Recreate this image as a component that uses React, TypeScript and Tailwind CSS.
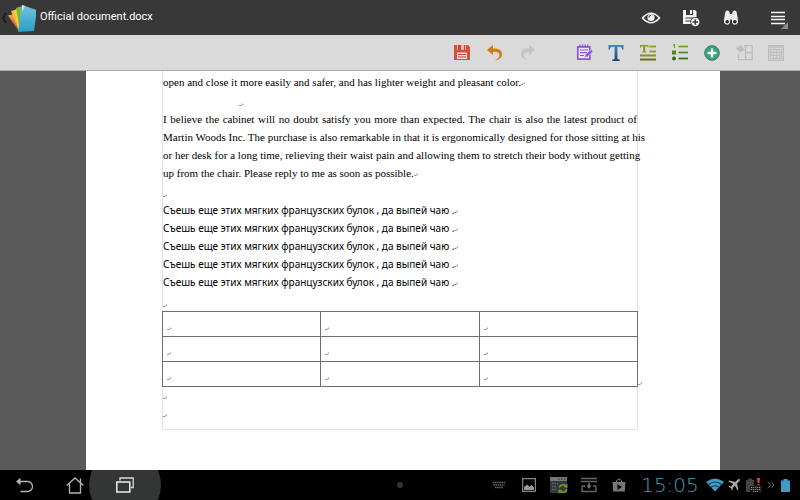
import type { ReactNode } from "react";

interface IconButtonProps {
  label: string;
  className: string;
  disabled?: boolean;
  children: ReactNode;
}

function IconButton({ label, className, disabled, children }: IconButtonProps) {
  return (
    <button
      type="button"
      aria-label={label}
      disabled={disabled}
      className={`flex h-full shrink-0 items-center justify-center ${className}`}
    >
      {children}
    </button>
  );
}

function AppLogo() {
  return (
    <svg width="36" height="30" viewBox="0 0 36 30" aria-hidden="true">
      <defs>
        <linearGradient id="logoBlue" x1="0" y1="0" x2="0" y2="1">
          <stop offset="0" stopColor="#76c3df" />
          <stop offset="1" stopColor="#279fc4" />
        </linearGradient>
        <linearGradient id="logoOrange" x1="0" y1="0" x2="0" y2="1">
          <stop offset="0" stopColor="#f5a25a" />
          <stop offset="1" stopColor="#cf4a22" />
        </linearGradient>
      </defs>
      <path d="M6 10L3 15l3 5" fill="none" stroke="#171717" strokeWidth="1.500" />
      <path d="M8 12.500l6-1.500 6 15-2 1z" fill="url(#logoOrange)" />
      <path d="M11 8l7-2 3 20-2 2z" fill="#f0bd35" />
      <path d="M14 7.500l4-2 4 3-1 19-2 .5z" fill="#e8d34a" />
      <path d="M16 5l6-2 2 24-4 1z" fill="#7fb53e" />
      <path d="M22 2l15 5-3 21-16 1z" fill="url(#logoBlue)" />
      <path d="M22 2l3 1-3 6z" fill="#bfe4ef" />
    </svg>
  );
}

function EyeIcon() {
  return (
    <svg width="20" height="14" viewBox="0 0 20 14" aria-hidden="true">
      <path
        d="M1.500 7Q10-2.500 18.500 7Q10 16.500 1.500 7z"
        fill="none"
        stroke="#f2f2f2"
        strokeWidth="1.700"
      />
      <circle cx="10" cy="6.500" r="3.600" fill="#f2f2f2" />
      <path d="M8 6.500a2 2 0 0 1 2-2" fill="none" stroke="#444" strokeWidth="1.200" />
    </svg>
  );
}

function SaveAsIcon() {
  return (
    <svg width="18" height="18" viewBox="0 0 18 18" aria-hidden="true">
      <path d="M1 1h12l1.500 1.500V15H1z" fill="#f2f2f2" />
      <path d="M4 1v5h7V1" fill="#383838" />
      <path d="M8 1h2v4H8z" fill="#f2f2f2" />
      <path d="M3.500 9h8M3.500 12h6" stroke="#383838" strokeWidth="1.200" />
      <circle cx="13.300" cy="13" r="5" fill="#383838" />
      <circle cx="13.300" cy="13" r="4.200" fill="#f2f2f2" />
      <path d="M13.300 10.300v5.400M10.600 13H16" stroke="#383838" strokeWidth="1.400" />
    </svg>
  );
}

function BinocularsIcon() {
  return (
    <svg width="14" height="15" viewBox="0 0 14 15" aria-hidden="true">
      <path
        d="M1.500 1.500Q3.300-.3 5.200 1.500L6 4h2l.8-2.500Q10.700-.3 12.500 1.500L14 9.500v3.300Q12.500 15 10 14.800L8 13V9.500H6V13L4 14.800Q1.500 15 0 12.800V9.500z"
        fill="#ededed"
      />
      <circle cx="3.200" cy="11.800" r="1.800" fill="#2b2b2b" />
      <circle cx="10.800" cy="11.800" r="1.800" fill="#2b2b2b" />
    </svg>
  );
}

function MenuIcon() {
  return (
    <svg width="14" height="14" viewBox="0 0 14 14" aria-hidden="true">
      <path d="M0 1.500h14M0 5.500h14M0 8.500h14M0 12.500h14" stroke="#f5f5f5" strokeWidth="1.300" />
    </svg>
  );
}

function SaveIcon() {
  return (
    <svg width="16" height="17" viewBox="0 0 16 17" aria-hidden="true">
      <path d="M0 1h14l2 2v13H0z" fill="#d4503a" />
      <path d="M3 1h9v5H3z" fill="#e9b5a9" />
      <path d="M4 1h3v5H4zM10 1h1v5h-1z" fill="#c84630" />
      <path d="M3 8.500h10V15H3z" fill="#f0dcd6" />
      <path d="M4 10.500h8M4 13h8" stroke="#c84630" strokeWidth="1.200" />
    </svg>
  );
}

function UndoIcon() {
  return (
    <svg width="16" height="16" viewBox="0 0 16 16" aria-hidden="true">
      <path d="M0 5l6-5v3.500c6-.5 9 2 9 5.500 0 3.500-3 6-7 6.500 3-1.500 4.500-3.500 4.500-5.500 0-2.500-2.500-3.500-6.500-3.300V10z" fill="#cf7d12" />
    </svg>
  );
}

function RedoIcon() {
  return (
    <svg width="16" height="16" viewBox="0 0 16 16" aria-hidden="true">
      <path d="M15 5L9 0v3.500C4 3.500 1 5.500 1 9c0 3 3 5.500 6.500 6C5 13.500 3.800 12 3.800 10 3.800 8 6 7 9 7v3z" fill="#c4c4c4" />
    </svg>
  );
}

function NoteIcon() {
  return (
    <svg width="17" height="17" viewBox="0 0 17 17" aria-hidden="true">
      <path d="M1.800 2.800h12v12.400h-12z" fill="#efe6fa" stroke="#8f55d6" strokeWidth="1.700" />
      <path d="M4 .5v3M6.600.5v3M9.200.5v3M11.800.5v3" stroke="#8f55d6" strokeWidth="1.300" />
      <path d="M4 6h8M4 8.700h7M4 11.500h4" stroke="#8f55d6" strokeWidth="1.200" />
      <path d="M8.500 13.500l1-3L15 5.500l2 2-5.500 5.200z" fill="#8f55d6" stroke="#e4dcec" strokeWidth=".6" />
    </svg>
  );
}

function FontIcon() {
  return (
    <svg width="16" height="16" viewBox="0 0 16 16" aria-hidden="true">
      <defs>
        <linearGradient id="fontBlue" x1="0" y1="0" x2="0" y2="1">
          <stop offset="0" stopColor="#3c86d2" />
          <stop offset="1" stopColor="#1d3f73" />
        </linearGradient>
      </defs>
      <path d="M.5 0h15v4.500h-1.200C13.800 2.500 13 1.800 11 1.800H9.400V13c0 1 .6 1.500 2.300 1.500V16H4.300v-1.500c1.700 0 2.300-.5 2.300-1.500V1.800H5C3 1.800 2.200 2.500 1.700 4.500H.5z" fill="url(#fontBlue)" />
    </svg>
  );
}

function ParagraphIcon() {
  return (
    <svg width="16" height="17" viewBox="0 0 16 17" aria-hidden="true">
      <path d="M0 1h8.500v2.500h-1L7 2.300H5.200v5l1 .4v.8h-4v-.8l1-.4v-5H1.500L1 3.500H0z" fill="#8b941c" />
      <path d="M9.500 2.500H16M9.500 7.500H16" stroke="#98a021" strokeWidth="1.800" />
      <path d="M0 11.500h16" stroke="#8b901a" strokeWidth="2" />
      <path d="M0 15.500h16" stroke="#6f6e14" strokeWidth="2" />
    </svg>
  );
}

function ListIcon() {
  return (
    <svg width="16" height="17" viewBox="0 0 16 17" aria-hidden="true">
      <path d="M1 1l1.500-.5V4" fill="none" stroke="#69a51c" strokeWidth="1.200" />
      <path d="M0 6.500h4v4H0z" fill="#4c8a12" />
      <circle cx="2" cy="14.500" r="2" fill="#366b12" />
      <path d="M6.500 2.500H16" stroke="#69a51c" strokeWidth="1.700" />
      <path d="M6.500 8.500H16" stroke="#4c8a12" strokeWidth="1.700" />
      <path d="M6.500 14.500H16" stroke="#366b12" strokeWidth="1.700" />
    </svg>
  );
}

function AddIcon() {
  return (
    <svg width="16" height="16" viewBox="0 0 16 16" aria-hidden="true">
      <circle cx="8" cy="8" r="7.300" fill="#39a07f" stroke="#258361" />
      <path d="M8 3.500v9M3.500 8h9" stroke="#f4fbf8" strokeWidth="2.400" />
    </svg>
  );
}

function InsertCellIcon() {
  return (
    <svg width="17" height="17" viewBox="0 0 17 17" aria-hidden="true">
      <path d="M8 1.700h8.200v14H2.500V9.500M9.500 2v14M9.500 8.500H16" fill="none" stroke="#bdbdbd" strokeWidth="1.300" />
      <path d="M0 4l5-3 3.500 4.500L4 8.500z" fill="#bdbdbd" />
    </svg>
  );
}

function TableIcon() {
  return (
    <svg width="16" height="16" viewBox="0 0 16 16" aria-hidden="true">
      <path d="M.6.6h14.800v14.800H.6z" fill="#d4d4d4" stroke="#bdbdbd" strokeWidth="1.200" />
      <path d="M1 1h14v2H1z" fill="#c2c2c2" />
      <path d="M2.500 4.500h11v9h-11zM2.500 7.500h11M2.500 10.500h11M5.500 4.500v9M8.500 4.500v9M11.500 4.500v9" fill="none" stroke="#c0c0c0" />
    </svg>
  );
}

// Paragraph mark shown at the end of each line of text
function Mark() {
  return (
    <svg width="4" height="4" viewBox="0 0 4 4" className="inline align-baseline" aria-hidden="true">
      <path d="M3.500.5v1.200L1 2.500M0 2.500h1.500" fill="none" stroke="#808080" strokeWidth=".8" />
    </svg>
  );
}

function TitleBar() {
  return (
    <header className="flex h-[35px] shrink-0 items-center bg-[#383838] text-white">
      <AppLogo />
      <h1 className="min-w-0 flex-1 truncate pl-1 font-[Roboto,sans-serif] text-[11px]">
        Official document.docx
      </h1>
      <IconButton label="View mode" className="w-10">
        <EyeIcon />
      </IconButton>
      <IconButton label="Save as" className="w-10">
        <SaveAsIcon />
      </IconButton>
      <IconButton label="Find" className="w-10">
        <BinocularsIcon />
      </IconButton>
      <IconButton label="Menu" className="relative w-[49px] pl-1">
        <MenuIcon />
        <svg width="7" height="7" viewBox="0 0 7 7" className="absolute right-3 bottom-1.5" aria-hidden="true">
          <path d="M7 0v7H0z" fill="#8c8c8c" />
        </svg>
      </IconButton>
    </header>
  );
}

function Toolbar() {
  return (
    <div
      role="toolbar"
      aria-label="Editing"
      className="flex h-9 shrink-0 items-center justify-end border-b border-[#aaaaaa] bg-[#dadada] pr-2"
    >
      <div className="mr-6 flex h-full gap-px">
        <IconButton label="Save" className="w-8">
          <SaveIcon />
        </IconButton>
        <IconButton label="Undo" className="w-8">
          <UndoIcon />
        </IconButton>
        <IconButton label="Redo" className="w-8" disabled>
          <RedoIcon />
        </IconButton>
      </div>
      <IconButton label="Notes" className="w-8">
        <NoteIcon />
      </IconButton>
      <IconButton label="Font" className="w-8">
        <FontIcon />
      </IconButton>
      <IconButton label="Paragraph" className="w-8">
        <ParagraphIcon />
      </IconButton>
      <IconButton label="Bullets and numbering" className="w-8">
        <ListIcon />
      </IconButton>
      <IconButton label="Insert" className="w-8">
        <AddIcon />
      </IconButton>
      <IconButton label="Cell fill" className="w-8" disabled>
        <InsertCellIcon />
      </IconButton>
      <IconButton label="Table" className="w-8" disabled>
        <TableIcon />
      </IconButton>
    </div>
  );
}

const letterLines = [
  "I believe the cabinet will no doubt satisfy you more than expected. The chair is also the latest product of",
  "Martin Woods Inc. The purchase is also remarkable in that it is ergonomically designed for those sitting at his",
  "or her desk for a long time, relieving their waist pain and allowing them to stretch their body without getting",
];
const sampleLines = [1, 2, 3, 4, 5];
const tableRows = [1, 2, 3];
const tableCols = [1, 2, 3];

function DocumentPage() {
  return (
    <main className="min-h-0 flex-1 overflow-hidden bg-[#5a5a5a] pr-20 pl-[86px]">
      <article className="h-full bg-white pr-[82px] pl-[76px] font-['Liberation_Serif',serif] text-[11px] leading-[18px] text-black">
        <div className="border-x border-b border-[#e2e2e2] pt-0.5 pb-1.5">
          <p>
            open and close it more easily and safer, and has lighter weight and
            pleasant color.
            <Mark />
          </p>
          <p className="h-[18px] pt-[3px] pl-19">
            <Mark />
          </p>
          <p className="pt-px">
            {letterLines.map((line) => (
              <span key={line} className="block whitespace-nowrap [text-align-last:justify]">
                {line}
              </span>
            ))}
            up from the chair. Please reply to me as soon as possible.
            <Mark />
          </p>
          <p className="h-[18px] pt-[3px]">
            <Mark />
          </p>
          <div className="pt-px pb-px font-['Noto_Sans',sans-serif] text-[10px]">
            {sampleLines.map((line) => (
              <p key={line}>
                Съешь еще этих мягких французских булок , да выпей чаю .
                <Mark />
              </p>
            ))}
          </div>
          <p className="h-[18px] pt-[3px]">
            <Mark />
          </p>
          <div className="relative -mx-px mt-px">
            <table className="w-full table-fixed border-collapse">
              <tbody>
                {tableRows.map((row) => (
                  <tr key={row}>
                    {tableCols.map((col) => (
                      <td key={col} className="h-[25px] border border-[#6e6e6e] px-1 pt-1.5 pb-0 align-top">
                        <Mark />
                      </td>
                    ))}
                  </tr>
                ))}
              </tbody>
            </table>
            <span className="absolute -right-1 -bottom-1">
              <Mark />
            </span>
          </div>
          <p>
            <Mark />
          </p>
          <p>
            <Mark />
          </p>
        </div>
      </article>
    </main>
  );
}

function SystemBar() {
  return (
    <footer className="flex h-[30px] shrink-0 items-center overflow-hidden bg-black">
      <nav className="flex h-full flex-1" aria-label="System">
        <IconButton label="Back" className="w-[50px]">
          <svg width="18" height="16" viewBox="0 0 18 16" aria-hidden="true">
            <path d="M3 4.500h8.500a5 5 0 0 1 0 10H4.500" fill="none" stroke="#b5b5b5" strokeWidth="1.300" />
            <path d="M0 4.500L4.500.8v7.400z" fill="#b5b5b5" />
          </svg>
        </IconButton>
        <IconButton label="Home" className="w-[50px]">
          <svg width="18" height="17" viewBox="0 0 18 17" aria-hidden="true">
            <path d="M.7 8.500L9 1l8.300 7.500M3.500 6.500V16h11V6.500M14.500 5.500v-4" fill="none" stroke="#b5b5b5" strokeWidth="1.300" />
          </svg>
        </IconButton>
        <IconButton label="Recent apps" className="relative w-[50px]">
          <span className="absolute -inset-x-[11px] -inset-y-[21px] rounded-full bg-[#333634]" />
          <svg width="18" height="16" viewBox="0 0 18 16" className="relative" aria-hidden="true">
            <path d="M.8 5h13v10H.8z" fill="none" stroke="#eeeeee" strokeWidth="1.500" />
            <path d="M4 3.500V1h13.200v9.500H15" fill="none" stroke="#d8d8d8" strokeWidth="1.300" />
          </svg>
        </IconButton>
      </nav>
      <span className="size-1.5 rounded-full bg-[#363636]" />
      <div className="flex h-full flex-1 items-center justify-end">
        <span className="flex w-[30px] justify-center">
          <svg width="12" height="8" viewBox="0 0 12 8" aria-hidden="true">
            <path d="M0 1.500h12M.5 4h11M2 6.500h8" stroke="#666" strokeWidth="1.700" strokeDasharray="1.500 .6" />
          </svg>
        </span>
        <span className="flex w-[30px] justify-center">
          <svg width="14" height="14" viewBox="0 0 14 14" aria-hidden="true">
            <path d="M.6.6h12.800v12.800H.6z" fill="none" stroke="#858585" strokeWidth="1.200" />
            <path d="M2 12V9l3-2.500 2.500 2.200L9.500 7l2.500 2.500V12z" fill="#999" />
          </svg>
        </span>
        <span className="flex w-[30px] justify-center">
          <svg width="18" height="18" viewBox="0 0 18 18" aria-hidden="true">
            <path d="M0 1h17v4H0z" fill="#777" />
            <path d="M8 3h1.500M11 3h1.500M14 3h1.500" stroke="#222" />
            <path d="M0 5h17v12H0z" fill="#35383a" />
            <path d="M2 7.500h6M2 10.500h5M2 13.500h5" stroke="#626669" strokeWidth="1.300" strokeDasharray="1.500 1" />
            <path d="M9.300 11.500a4 4 0 0 1 7-1M16.700 13a4 4 0 0 1-7 2" fill="none" stroke="#6f9921" strokeWidth="1.700" />
            <path d="M17.500 7.500V12l-4-1zM8.500 18v-4.500l4 1z" fill="#6f9921" />
          </svg>
        </span>
        <span className="flex w-[30px] justify-center">
          <svg width="16" height="16" viewBox="0 0 16 16" aria-hidden="true">
            <path d="M0 1.500h16M0 4.500h16" stroke="#666" strokeWidth="1.300" />
            <path d="M1 9v5.500h14V9M1 9h3M12 9h3" fill="none" stroke="#666" strokeWidth="1.400" />
            <path d="M8 6v3" stroke="#777" strokeWidth="1.500" />
            <path d="M5.500 8.500h5L8 12z" fill="#777" />
          </svg>
        </span>
        <span className="flex w-[30px] justify-center">
          <svg width="14" height="14" viewBox="0 0 14 14" aria-hidden="true">
            <path d="M4.500 4V2.500Q7-.5 9.500 2.500V4" fill="none" stroke="#777" />
            <path d="M.5 4h13l-.7 9.500H1.200z" fill="#777" />
            <path d="M5.500 6v6l4.500-3z" fill="#080808" />
          </svg>
        </span>
        <time className="w-[72px] text-center font-['DejaVu_Sans_Light','DejaVu_Sans',sans-serif] text-[20px] leading-[30px] font-extralight text-[#3f9cc4]">
          15:05
        </time>
        <svg width="18" height="14" viewBox="0 0 18 14" aria-label="Wi-Fi">
          <path d="M9 13.500L0 4Q9-3 18 4z" fill="#3e9cc4" />
          <path d="M2.500 6.500Q9 1.500 15.500 6.500M5 9.300q4-3 8 0" fill="none" stroke="#0b2f40" strokeWidth="1.100" />
        </svg>
        <svg width="12" height="12" viewBox="0 0 12 12" className="ml-1" aria-label="Airplane mode">
          <path d="M11.700.3c-.8-.5-1.800 0-2.500.8L7.400 3 1 1.500l-.8.8L5.300 5 3 7.400l-2-.3-.6.7 2.400 1.200 1.300 2.500.7-.6-.2-2 2.300-2.300 2.700 5 .8-.8L9 4.500l1.900-1.800c.8-.8 1.300-1.600.8-2.400z" fill="#a8a8a8" />
        </svg>
        <svg width="17" height="15" viewBox="0 0 17 15" className="ml-1.5" aria-label="Keyboard battery">
          <path d="M0 2h2V.5h4V2h2v12H0z" fill="#444" />
          <path d="M11 0h3l-.6 5h-1.800zM11.500 6h2v1.500h-2z" fill="#d94e28" />
          <path d="M4 8h12v6.500H4z" fill="#191919" />
          <path d="M5 9.500h10M5 11.500h10M7 13.500h6" stroke="#8a8a8a" strokeDasharray="1.200 .8" />
        </svg>
        <svg width="8" height="8" viewBox="0 0 8 8" className="ml-1" aria-hidden="true">
          <path d="M.7.7L3.500 4 .7 7.300M4.200.7L7 4 4.200 7.300" fill="none" stroke="#666" />
        </svg>
        <svg width="9" height="13" viewBox="0 0 9 13" className="mr-2.5 ml-1.5" aria-label="Battery">
          <path d="M0 1.500h2.500V0h4v1.500H9V13H0z" fill="#3e9cc4" />
        </svg>
      </div>
    </footer>
  );
}

export default function App() {
  return (
    <div className="flex h-screen flex-col">
      <TitleBar />
      <Toolbar />
      <DocumentPage />
      <SystemBar />
    </div>
  );
}
